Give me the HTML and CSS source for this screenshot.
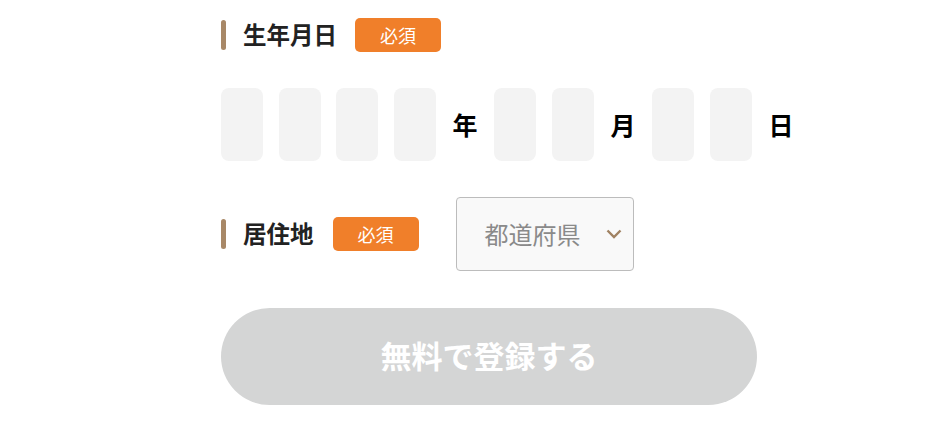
FILE: index.html
```html
<!DOCTYPE html>
<html lang="ja">
<head>
<meta charset="utf-8">
<link rel="stylesheet" href="styles.css">
</head>
<body>
<form class="form">
  <div class="field-head">
    <span class="bar"></span>
    <span class="label">生年月日</span>
    <span class="badge badge-birth">必須</span>
  </div>
  <div class="date-row">
    <span class="digit"></span>
    <span class="digit"></span>
    <span class="digit"></span>
    <span class="digit"></span>
    <span class="unit">年</span>
    <span class="digit"></span>
    <span class="digit"></span>
    <span class="unit">月</span>
    <span class="digit"></span>
    <span class="digit"></span>
    <span class="unit">日</span>
  </div>
  <div class="field-head residence">
    <span class="bar"></span>
    <span class="label">居住地</span>
    <span class="badge badge-res">必須</span>
    <div class="select">
      <span class="select-text">都道府県</span>
      <svg class="chevron" width="16" height="10" viewBox="0 0 16 10"><path d="M1.5 1.5 L8 8 L14.5 1.5" fill="none" stroke="#a08262" stroke-width="2.4"/></svg>
    </div>
  </div>
  <div class="submit">無料で登録する</div>
</form>
</body>
</html>
```

FILE: styles.css
```css
html, body {
  margin: 0;
  padding: 0;
  background: #fff;
}
body {
  font-family: "Noto Sans CJK JP", "Noto Sans", sans-serif;
  width: 946px;
  height: 423px;
  overflow: hidden;
}
.form {
  margin-left: 221px;
  width: 536px;
  padding-top: 18px;
  display: flex;
  flex-direction: column;
}
.field-head {
  display: flex;
  align-items: center;
  height: 34px;
}
.bar {
  width: 5px;
  height: 30px;
  border-radius: 3px;
  background: #a88867;
  margin-right: 17px;
}
.label {
  font-size: 23.5px;
  font-weight: 700;
  color: #222;
  line-height: 1;
}
.badge {
  width: 86px;
  height: 34px;
  border-radius: 5px;
  background: #f07f2a;
  color: #fff;
  font-size: 18px;
  display: flex;
  align-items: center;
  justify-content: center;
  line-height: 1;
}
.badge-birth { margin-left: 18px; }
.badge-res { margin-left: 19px; }
.date-row {
  display: flex;
  align-items: center;
  gap: 15.67px;
  margin-top: 36px;
  height: 73px;
}
.digit {
  width: 42px;
  height: 73px;
  border-radius: 8px;
  background: #f3f3f3;
  flex: none;
}
.unit {
  width: 27px;
  flex: none;
  text-align: center;
  font-size: 25px;
  font-weight: 700;
  color: #000;
  line-height: 1;
}
.residence {
  margin-top: 36px;
  height: 74px;
}
.select {
  margin-left: 37px;
  width: 178px;
  height: 74px;
  box-sizing: border-box;
  border: 1px solid #bcbcbc;
  border-radius: 4px;
  background: #f9f9f9;
  display: flex;
  align-items: center;
  padding-left: 28px;
  padding-right: 11px;
}
.select-text {
  font-size: 24px;
  color: #8a8a8a;
  line-height: 1;
  flex: 1;
}
.chevron { display: block; }
.submit {
  margin-top: 37px;
  height: 97px;
  box-sizing: border-box;
  padding-bottom: 4px;
  border-radius: 49px;
  background: #d4d5d5;
  color: #fff;
  font-size: 31px;
  font-weight: 700;
  display: flex;
  align-items: center;
  justify-content: center;
  line-height: 1;
}
```
